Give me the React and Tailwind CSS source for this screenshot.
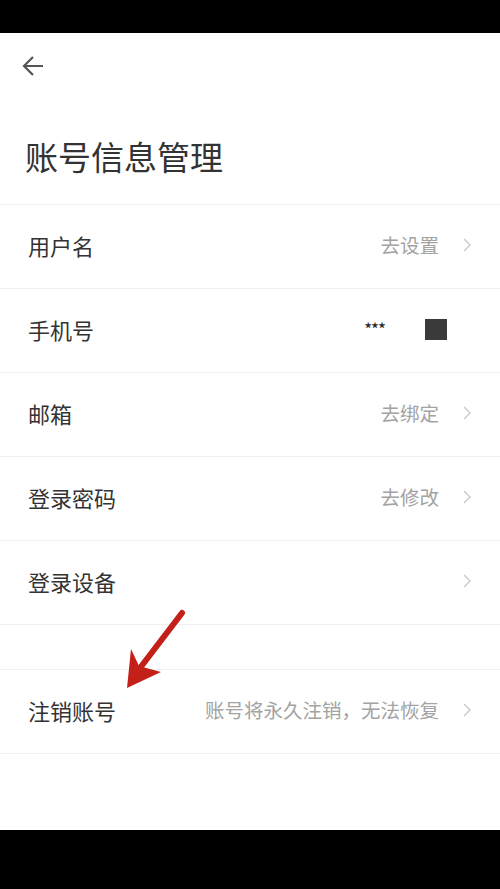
import React from 'react';

const rows = [
  { label: '用户名', value: '去设置' },
  { label: '手机号', phone: true },
  { label: '邮箱', value: '去绑定' },
  { label: '登录密码', value: '去修改' },
  { label: '登录设备', value: '' },
];

const Chevron = () => (
  <svg width="12" height="16" viewBox="0 0 12 16" className="ml-[22px] shrink-0">
    <path d="M3 2l6 6-6 6" fill="none" stroke="#c8c8c8" strokeWidth="1.4" />
  </svg>
);

const Row = ({ label, value, phone }) => (
  <div className="h-[84px] flex items-center pl-[28px] pr-[27px] pb-[3px] border-b border-[#efefef]">
    <span className="text-[22px] text-[#333]">{label}</span>
    <div className="ml-auto flex items-center">
      {phone ? (
        <>
          <span className="text-[17px] text-[#222] mr-[40px] tracking-[-1px]">***</span>
          <span className="w-[22px] h-[21px] bg-[#3a3a3a] mr-[26px]" />
        </>
      ) : (
        <>
          <span className="text-[19.5px] text-[#a3a3a3]">{value}</span>
          <Chevron />
        </>
      )}
    </div>
  </div>
);

export default function App() {
  return (
    <div className="relative w-[500px] h-[889px] bg-white flex flex-col font-['Noto_Sans_CJK_SC',sans-serif]">
      <div className="h-[33px] bg-black shrink-0" />

      {/* header */}
      <div className="h-[66px] flex items-center pl-[21px]">
        <svg width="24" height="24" viewBox="0 0 24 24">
          <path d="M22 12H3M12 3l-9 9 9 9" fill="none" stroke="#555" strokeWidth="2.2" />
        </svg>
      </div>
      <div className="h-[105px] pt-[41px] pl-[25px]">
        <h1 className="text-[33px] leading-[32px] text-[#333] font-normal">账号信息管理</h1>
      </div>

      <div className="border-t border-[#efefef]">
        {rows.map((r) => (
          <Row key={r.label} {...r} />
        ))}
      </div>

      <div className="h-[44px]" />

      <div className="border-t border-[#efefef]">
        <Row label="注销账号" value="账号将永久注销，无法恢复" />
      </div>

      <div className="flex-1" />
      <div className="h-[59px] bg-black shrink-0" />

      {/* red annotation arrow */}
      <svg className="absolute left-0 top-0 pointer-events-none" width="500" height="889">
        <line x1="182" y1="613" x2="140" y2="668" stroke="#c4201a" strokeWidth="6" strokeLinecap="round" />
        <polygon points="127,688 131,649 139,666 161,672" fill="#c4201a" />
      </svg>
    </div>
  );
}
